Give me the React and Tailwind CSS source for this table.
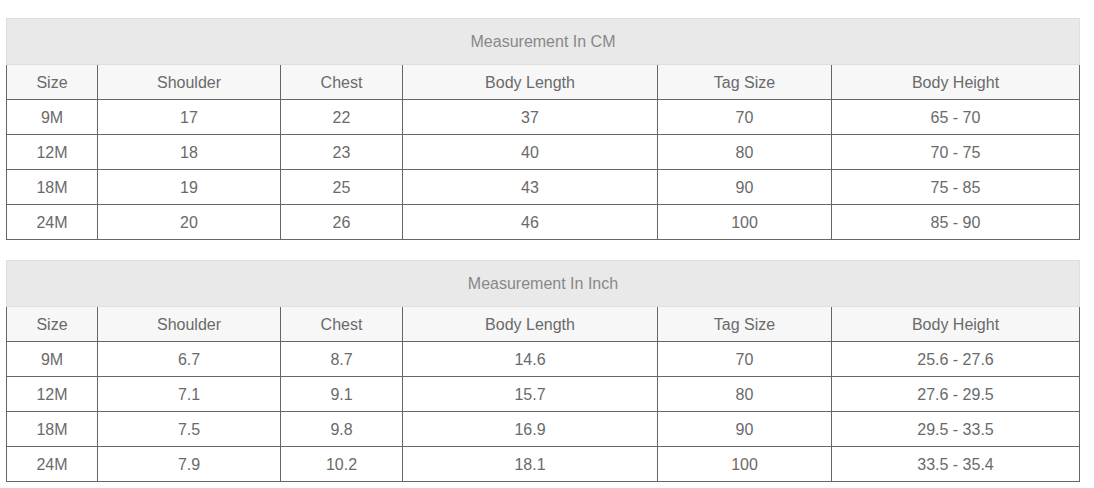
import React from "react";

const cols = ["Size", "Shoulder", "Chest", "Body Length", "Tag Size", "Body Height"];
const widths = ["w-[91px]", "w-[183px]", "w-[122px]", "w-[255px]", "w-[174px]", "w-[248px]"];

const cm = [
  ["9M", "17", "22", "37", "70", "65 - 70"],
  ["12M", "18", "23", "40", "80", "70 - 75"],
  ["18M", "19", "25", "43", "90", "75 - 85"],
  ["24M", "20", "26", "46", "100", "85 - 90"],
];
const inch = [
  ["9M", "6.7", "8.7", "14.6", "70", "25.6 - 27.6"],
  ["12M", "7.1", "9.1", "15.7", "80", "27.6 - 29.5"],
  ["18M", "7.5", "9.8", "16.9", "90", "29.5 - 33.5"],
  ["24M", "7.9", "10.2", "18.1", "100", "33.5 - 35.4"],
];

function Row({ cells, header }) {
  return (
    <div className={"flex h-[35px] " + (header ? "bg-[#f7f7f7]" : "bg-white")}>
      {cells.map((c, i) => (
        <div
          key={i}
          className={
            widths[i] +
            " shrink-0 flex items-center justify-center pt-[2px] border-r border-b border-[#666666] text-[16px] text-[#6a6a6a]"
          }
        >
          {c}
        </div>
      ))}
    </div>
  );
}

function SizeTable({ title, rows }) {
  return (
    <div className="w-[1074px]">
      <div className="h-[47px] flex items-center justify-center bg-[#e9e9e9] border border-[#dedede] text-[16px] text-[#888888]">
        {title}
      </div>
      <div className="border-l border-[#666666]">
        <Row cells={cols} header />
        {rows.map((r, i) => (
          <Row key={i} cells={r} />
        ))}
      </div>
    </div>
  );
}

export default function App() {
  return (
    <div
      className="w-[1094px] h-[488px] bg-white pt-[18px] pl-[6px] flex flex-col gap-[20px]"
      style={{ fontFamily: '"Liberation Sans", Arial, sans-serif' }}
    >
      <SizeTable title="Measurement In CM" rows={cm} />
      <SizeTable title="Measurement In Inch" rows={inch} />
    </div>
  );
}
